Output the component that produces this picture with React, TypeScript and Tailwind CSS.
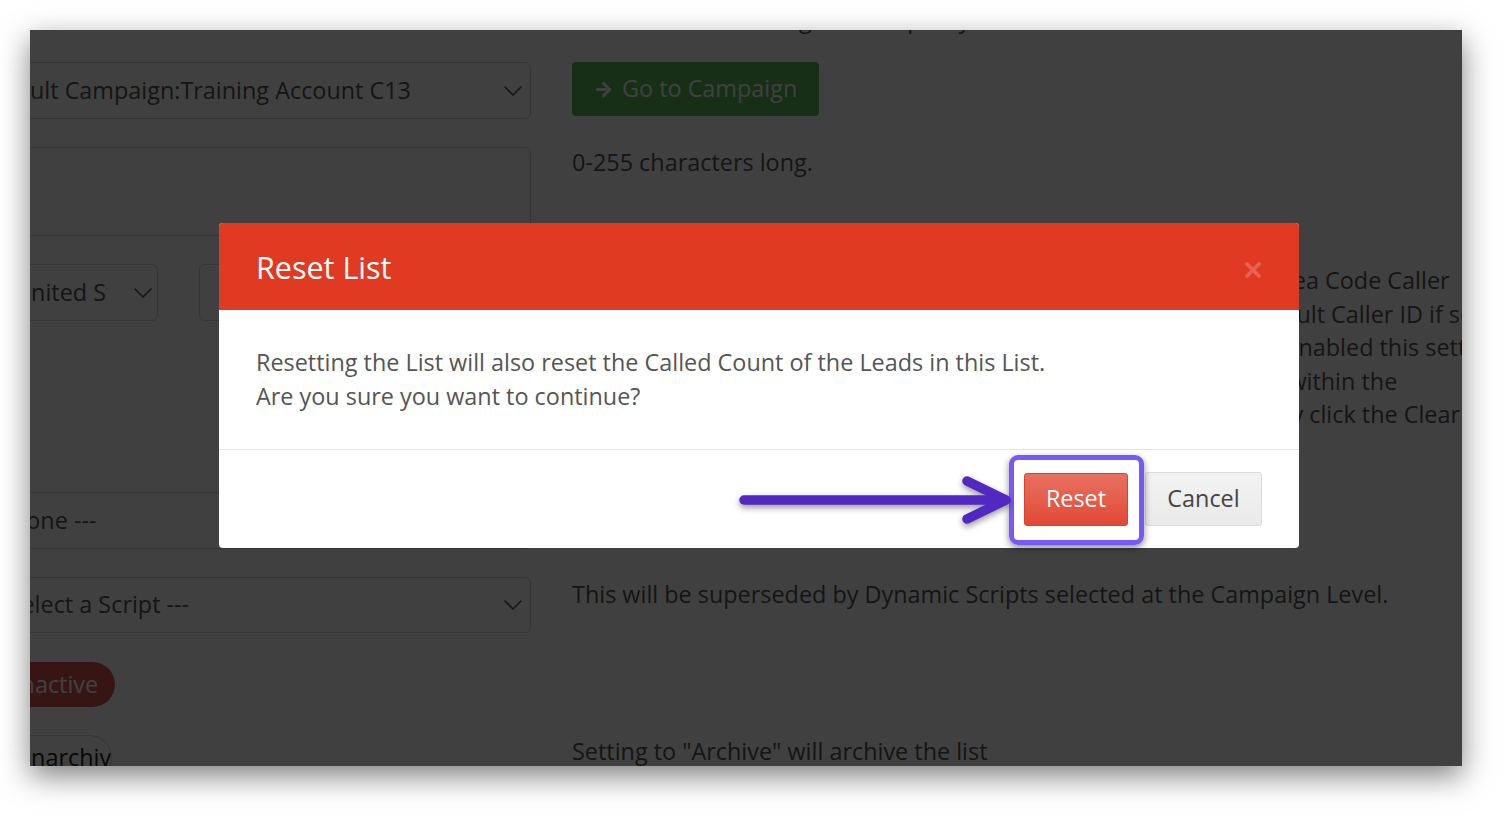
import { ArrowRight } from "lucide-react";

function Chevron() {
  return (
    <svg width="18" height="10" viewBox="0 0 18 10" fill="none" className="shrink-0">
      <polyline points="1,1 9,9 17,1" stroke="#555" strokeWidth="1.6" strokeLinecap="round" strokeLinejoin="round" />
    </svg>
  );
}

function Select({ label, className = "" }: { label: string; className?: string }) {
  return (
    <div
      className={`flex items-center justify-between border border-[#d2d2d2] rounded-[6px] bg-white pr-[8px] ${className}`}
    >
      <span className="whitespace-nowrap text-[#555]">{label}</span>
      <Chevron />
    </div>
  );
}

export default function App() {
  return (
    <div className="w-[1512px] h-[816px] bg-white overflow-hidden font-['Open_Sans',sans-serif] text-[23.4px] leading-[33.5px]">
      <div className="relative ml-[30px] mt-[30px] w-[1432px] h-[736px] overflow-hidden bg-white shadow-[0_10px_28px_rgba(0,0,0,0.5)]">
        {/* page under the backdrop */}
        <div className="-ml-[60px] w-[1560px] flex flex-col">
          <div className="flex -mt-[27px] h-[33.5px]">
            <div className="w-[561px] shrink-0" />
            <div className="ml-[41px] whitespace-nowrap text-[#555]">
              This list will be reassigned to a policy within the selected account.
            </div>
          </div>

          <div className="flex mt-[25.5px]">
            <Select label="Default Campaign:Training Account C13" className="w-[561px] h-[57px] shrink-0 pl-[8px]" />
            <div className="ml-[41px]">
              <button className="flex items-center gap-[8px] h-[54px] pl-[21px] pr-[22px] rounded-[4px] bg-[#5cb85c] text-white">
                <ArrowRight size={21} strokeWidth={3.4} />
                <span>Go to Campaign</span>
              </button>
            </div>
          </div>

          <div className="flex mt-[28px]">
            <textarea className="w-[561px] h-[89px] shrink-0 border border-[#d2d2d2] rounded-[6px] bg-white resize-y" />
            <div className="ml-[41px] -mt-px text-[#555]">0-255 characters long.</div>
          </div>

          <div className="flex mt-[28px]">
            <div className="w-[561px] shrink-0 flex">
              <div className="ml-[27px] w-[161px] h-[57px] shrink-0 flex items-center border border-[#d2d2d2] rounded-[6px] bg-white pl-[16px] pr-[5px]">
                <span className="w-[93px] overflow-hidden whitespace-nowrap text-[#555]">United States</span>
                <span className="ml-auto">
                  <Chevron />
                </span>
              </div>
              <div className="ml-[41px] flex-1 h-[57px] border border-[#d2d2d2] rounded-[6px] bg-white" />
            </div>
            <div className="ml-[41px] whitespace-nowrap text-[#555]">
              <div>If enabled, this setting will place all outbound calls using a Local Area Code Caller</div>
              <div>IDs. If no local numbers are available, calls will fall back to the Default Caller ID if set.</div>
              <div>Calls are matched to the lead's area codes. If you have previously enabled this setting,</div>
              <div>the system keeps any local numbers that were purchased for you within the</div>
              <div>account. To release all these numbers and stop local dialing, simply click the Clear button.</div>
            </div>
          </div>

          <div className="flex mt-[60.5px]">
            <div className="w-[561px] h-[57px] shrink-0 flex items-center border border-[#d2d2d2] rounded-[6px] bg-white pl-[9px] text-[#555]">
              --- None ---
            </div>
          </div>

          <div className="flex mt-[28px]">
            <Select label="--- Select a Script ---" className="w-[561px] h-[56px] shrink-0 pl-[9px]" />
            <div className="ml-[41px] whitespace-nowrap text-[#555] pt-[0.5px]">
              This will be superseded by Dynamic Scripts selected at the Campaign Level.
            </div>
          </div>

          <div className="flex mt-[29px]">
            <div className="w-[561px] shrink-0">
              <span className="ml-[30px] inline-flex items-center h-[45px] pl-[14px] pr-[17px] rounded-full bg-[#d9534f] text-white">
                Inactive
              </span>
            </div>
          </div>

          <div className="flex mt-[28px]">
            <div className="w-[561px] shrink-0">
              <div className="ml-[31px] w-[111px] h-[45px] flex items-center overflow-hidden whitespace-nowrap rounded-full border border-[#d2d2d2] bg-white pl-[12px] text-[#222]">
                Unarchive
              </div>
            </div>
            <div className="ml-[41px] whitespace-nowrap text-[#555]">Setting to "Archive" will archive the list</div>
          </div>
        </div>

        {/* backdrop */}
        <div className="absolute inset-0 bg-black/75" />

        {/* modal */}
        <div className="absolute left-[189px] top-[193px] w-[1080px] rounded-[4px] overflow-hidden bg-white">
          <div className="h-[87px] flex items-center justify-between bg-[#e13a23] px-[37px]">
            <h2 className="text-[30.5px] leading-[40px] text-white">Reset List</h2>
            <svg width="18" height="18" viewBox="0 0 18 18" className="mt-[6px] opacity-20">
              <path d="M3 3 L15 15 M15 3 L3 15" stroke="#fff" strokeWidth="3.8" strokeLinecap="round" />
            </svg>
          </div>
          <div className="px-[37px] py-[36px] text-[#555] border-b border-[#e5e5e5]">
            <p>Resetting the List will also reset the Called Count of the Leads in this List.</p>
            <p>Are you sure you want to continue?</p>
          </div>
          <div className="flex justify-end items-center gap-[17px] px-[37px] py-[22px]">
            <button className="h-[53px] w-[104px] rounded-[3px] border border-[#d8432f] bg-gradient-to-b from-[#e8705f] to-[#e14835] text-white">
              Reset
            </button>
            <button className="h-[54px] w-[117px] rounded-[3px] border border-[#dcdcdc] bg-gradient-to-b from-[#f3f3f3] to-[#e9e9e9] text-[#444]">
              Cancel
            </button>
          </div>
        </div>

        {/* annotation: highlight box */}
        <div className="absolute left-[979px] top-[425px] w-[135px] h-[90px] rounded-[9px] border-[5px] border-[#7759f9] shadow-[0_3px_7px_rgba(0,0,0,0.45)]" />

        {/* annotation: arrow */}
        <svg
          className="absolute left-[700px] top-[440px] drop-shadow-[0_3px_3px_rgba(0,0,0,0.4)]"
          width="290"
          height="62"
          viewBox="0 0 290 62"
          fill="none"
        >
          <path d="M14 30 L274 30" stroke="#5128c2" strokeWidth="9.5" strokeLinecap="round" />
          <path d="M237 11 L276 30 L237 49" stroke="#5128c2" strokeWidth="9.5" strokeLinecap="round" strokeLinejoin="round" />
        </svg>
      </div>
    </div>
  );
}
